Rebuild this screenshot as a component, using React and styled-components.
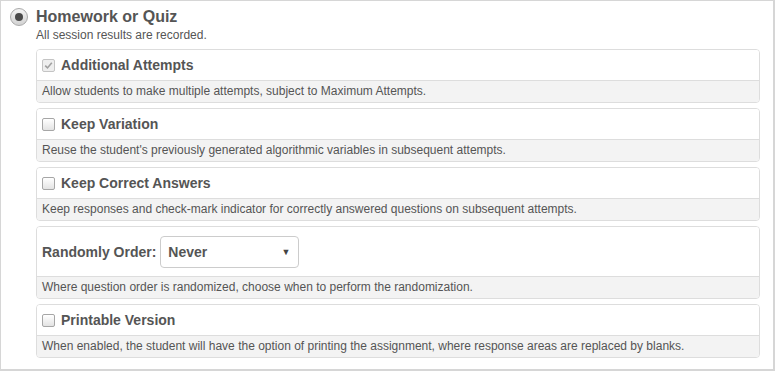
import React from "react";
import styled, { createGlobalStyle } from "styled-components";

const GlobalStyle = createGlobalStyle`
  html, body {
    margin: 0;
    padding: 0;
    background: #ffffff;
  }
  body {
    font-family: "Liberation Sans", Arial, sans-serif;
    color: #555555;
  }
`;

const Panel = styled.div`
  box-sizing: border-box;
  width: 775px;
  height: 371px;
  background: #ffffff;
  border-style: solid;
  border-color: #d6d6d6;
  border-width: 1px 2px 2px 1px;
  padding: 5px 13px 0 9px;
`;

const TitleRow = styled.div`
  display: flex;
  align-items: center;
  gap: 8px;
  height: 22px;
`;

const Radio = styled.span`
  box-sizing: border-box;
  width: 18px;
  height: 18px;
  border-radius: 50%;
  border: 1px solid #a9a9a9;
  background: linear-gradient(#f4f4f4, #d2d2d2);
  display: flex;
  align-items: center;
  justify-content: center;

  &::after {
    content: "";
    width: 8px;
    height: 8px;
    border-radius: 50%;
    background: #4a4a4a;
  }
`;

const Title = styled.span`
  font-size: 16px;
  font-weight: bold;
  color: #555555;
`;

const Body = styled.div`
  margin-left: 26px;
`;

const Subtitle = styled.div`
  font-size: 12px;
  line-height: 15px;
  margin-bottom: 6px;
`;

const Card = styled.div`
  border: 1px solid #dddddd;
  border-radius: 4px;
  margin-bottom: 5px;
  overflow: hidden;
`;

const CardHeader = styled.div`
  display: flex;
  align-items: center;
  gap: 6px;
  padding: 0 5px;
  height: ${(p) => (p.$tall ? "49px" : "30px")};
  background: #ffffff;
  border-bottom: 1px solid #dddddd;
`;

const Label = styled.span`
  font-size: 14px;
  font-weight: bold;
  color: #555555;
`;

const CardFooter = styled.div`
  height: 21px;
  line-height: 21px;
  padding: 0 5px;
  font-size: 12px;
  background: #f3f3f3;
  color: #555555;
`;

const Box = styled.span`
  box-sizing: border-box;
  width: 13px;
  height: 13px;
  border: 1px solid ${(p) => (p.$disabled ? "#c4c4c4" : "#a6a6a6")};
  border-radius: 2px;
  background: ${(p) =>
    p.$disabled ? "#eeeeee" : "linear-gradient(#ffffff, #e3e3e3)"};
  display: flex;
  align-items: center;
  justify-content: center;
`;

const Select = styled.div`
  box-sizing: border-box;
  width: 139px;
  height: 32px;
  border: 1px solid #cccccc;
  border-radius: 4px;
  display: flex;
  align-items: center;
  justify-content: space-between;
  padding: 0 8px 0 7px;
  margin-left: -2px;
  font-size: 14px;
  font-weight: bold;
  color: #555555;
`;

const Caret = styled.span`
  font-size: 9px;
  color: #444444;
`;

function Checkbox({ checked, disabled }) {
  return (
    <Box $disabled={disabled}>
      {checked && (
        <svg width="9" height="9" viewBox="0 0 9 9">
          <path
            d="M1.2 4.6 L3.5 6.9 L7.8 1.8"
            fill="none"
            stroke="#a0a0a0"
            strokeWidth="1.6"
          />
        </svg>
      )}
    </Box>
  );
}

const options = [
  {
    label: "Additional Attempts",
    checked: true,
    disabled: true,
    text: "Allow students to make multiple attempts, subject to Maximum Attempts.",
  },
  {
    label: "Keep Variation",
    text: "Reuse the student's previously generated algorithmic variables in subsequent attempts.",
  },
  {
    label: "Keep Correct Answers",
    text: "Keep responses and check-mark indicator for correctly answered questions on subsequent attempts.",
  },
  {
    select: true,
    label: "Randomly Order:",
    text: "Where question order is randomized, choose when to perform the randomization.",
  },
  {
    label: "Printable Version",
    text: "When enabled, the student will have the option of printing the assignment, where response areas are replaced by blanks.",
  },
];

export default function App() {
  return (
    <>
      <GlobalStyle />
      <Panel>
        <TitleRow>
          <Radio />
          <Title>Homework or Quiz</Title>
        </TitleRow>
        <Body>
          <Subtitle>All session results are recorded.</Subtitle>
          {options.map((o) => (
            <Card key={o.label}>
              <CardHeader $tall={o.select}>
                {o.select ? (
                  <>
                    <Label>{o.label}</Label>
                    <Select>
                      <span>Never</span>
                      <Caret>▼</Caret>
                    </Select>
                  </>
                ) : (
                  <>
                    <Checkbox checked={o.checked} disabled={o.disabled} />
                    <Label>{o.label}</Label>
                  </>
                )}
              </CardHeader>
              <CardFooter>{o.text}</CardFooter>
            </Card>
          ))}
        </Body>
      </Panel>
    </>
  );
}
